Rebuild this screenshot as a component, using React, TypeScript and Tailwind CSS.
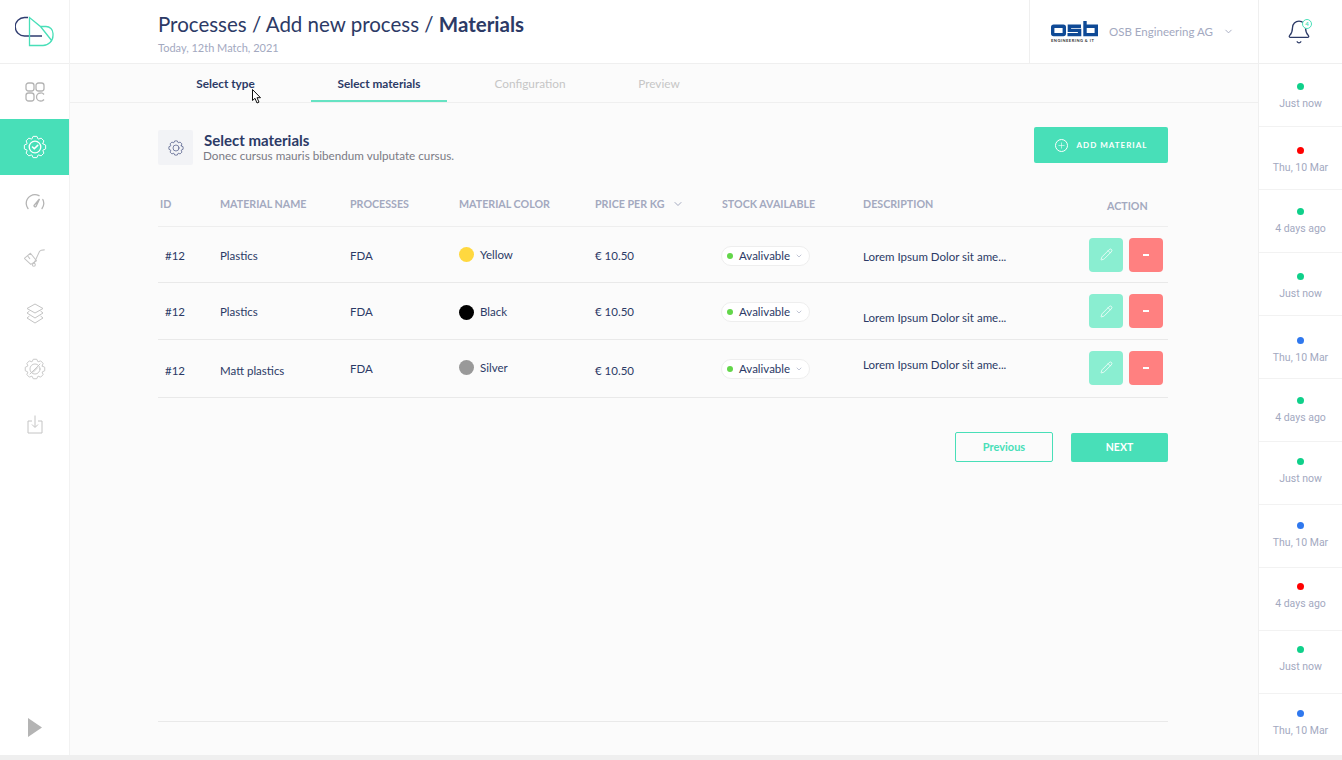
import { Bell, ChevronDown, Pencil, Plus } from 'lucide-react';

const font = { navy: 'text-[#2c3a66]' };

// 8 tooth gear outline, used by the sidebar and the section header
function gearPoints() {
  const pts: string[] = [];
  const teeth = 8;
  for (let i = 0; i < teeth; i++) {
    const a = (i / teeth) * Math.PI * 2;
    const w = Math.PI / teeth;
    const add = (r: number, t: number) =>
      pts.push(`${(12 + r * Math.cos(t)).toFixed(2)},${(12 + r * Math.sin(t)).toFixed(2)}`);
    add(8.6, a - w * 0.95);
    add(10.8, a - w * 0.45);
    add(10.8, a + w * 0.45);
    add(8.6, a + w * 0.95);
  }
  return pts.join(' ');
}

function Gear({ className, children }: { className?: string; children?: React.ReactNode }) {
  return (
    <svg viewBox="0 0 24 24" fill="none" stroke="currentColor" strokeLinejoin="round" strokeLinecap="round" className={className}>
      <polygon points={gearPoints()} />
      {children}
    </svg>
  );
}

function Logo() {
  return (
    <svg width="40" height="32" viewBox="0 0 40 32" fill="none" strokeWidth="1.3">
      <path d="M13 1.500H9.500a9.250 9.250 0 0 0 0 18.500H27" stroke="#2f3c70" />
      <path d="M14.500 1.500V29.500H28a10 10 0 0 0 10-10V17.500a7 7 0 0 0-7-7H25.500L14.500 1.500ZM25.500 10.500L37 25" stroke="#48dfb8" />
    </svg>
  );
}

function OsbLogo() {
  return (
    <div className="flex flex-col w-[47px] shrink-0">
      <svg width="47" height="16" viewBox="0 0 47 16" fill="none" stroke="#0f4a96" strokeWidth="3.400">
        <rect x="1.700" y="5.200" width="11.600" height="8.400" rx="1" />
        <path d="M30 5.200H18.400v4.200H28.600v4.200H16.500" />
        <path d="M34 0v13.600H45.300V5.200H34" />
      </svg>
      <span className="text-[4px] leading-[5px] mt-[1px] text-[#333] font-bold tracking-[0.5px] whitespace-nowrap">ENGINEERING &amp; IT</span>
    </div>
  );
}

const navIcons = [
  <svg key="a" width="20" height="20" viewBox="0 0 20 20" fill="none" stroke="currentColor" strokeWidth="1.300">
    <rect x="1" y="1" width="8" height="8" rx="2.500" />
    <rect x="11" y="1" width="8" height="8" rx="2.500" />
    <rect x="1" y="11" width="8" height="8" rx="2.500" />
    <path d="M19 12.500a3.800 3.800 0 0 0-3.500-1.500a4 4 0 0 0 0 8a3.800 3.800 0 0 0 3.500-1.500" />
  </svg>,
  <Gear key="b" className="w-[24px] h-[24px]">
    <circle cx="12" cy="12" r="5.800" strokeWidth="1.300" />
    <path d="M9.500 12l1.800 1.800 3.400-3.400" strokeWidth="1.600" />
  </Gear>,
  <svg key="c" width="20" height="16" viewBox="0 0 20 16" fill="none" stroke="currentColor" strokeWidth="1.300" strokeLinecap="round">
    <path d="M3 14.500A8.600 8.600 0 0 1 1.200 9.500a8.800 8.800 0 0 1 12.800-7.800" />
    <path d="M17 14.500a8.600 8.600 0 0 0 1.800-5a8.800 8.800 0 0 0-1-4" />
    <path d="M9 11.500L14.500 5l-3.500 7.500a1.200 1.200 0 0 1-2-1Z" />
  </svg>,
  <svg key="d" width="21" height="18" viewBox="0 0 62 52" fill="none" stroke="currentColor" strokeWidth="3" strokeLinejoin="round" strokeLinecap="round">
    <path d="M1 27L19 12L37 34L20 45Z" />
    <path d="M29 43L46 6Q49 2 60 2" />
    <path d="M11 20L17 28" />
    <circle cx="29" cy="46" r="4.500" />
  </svg>,
  <svg key="e" width="18" height="21" viewBox="0 0 18 21" fill="none" stroke="currentColor" strokeWidth="1" strokeLinejoin="round">
    <path d="M9 1L17 5.500L9 10L1 5.500Z" />
    <path d="M3.500 8L1 10L9 15L17 10L14.500 8" />
    <path d="M3.500 13L1 15L9 20L17 15L14.500 13" />
  </svg>,
  <Gear key="f" className="w-[22px] h-[22px]">
    <circle cx="12" cy="12" r="5.500" strokeWidth="1" />
    <path d="M6.500 17.500L17.500 6.500M10 15.500l5-5" strokeWidth="1" />
  </Gear>,
  <svg key="g" width="16" height="19" viewBox="0 0 16 19" fill="none" stroke="currentColor" strokeWidth="1">
    <path d="M5 6H1v12h14V6h-4" />
    <path d="M8 0.500V12M5 9.500L8 12.500l3-3" />
  </svg>,
];

const notes = [
  { label: 'Just now', dot: 'bg-[#0fd08a]', pt: 'pt-[19px]' },
  { label: 'Thu, 10 Mar', dot: 'bg-[#ff0000]', pt: 'pt-[20px]' },
  { label: '4 days ago', dot: 'bg-[#0fd08a]', pt: 'pt-[18px]' },
  { label: 'Just now', dot: 'bg-[#0fd08a]', pt: 'pt-[20px]' },
  { label: 'Thu, 10 Mar', dot: 'bg-[#2f78ee]', pt: 'pt-[21px]' },
  { label: '4 days ago', dot: 'bg-[#0fd08a]', pt: 'pt-[18px]' },
  { label: 'Just now', dot: 'bg-[#0fd08a]', pt: 'pt-[16px]' },
  { label: 'Thu, 10 Mar', dot: 'bg-[#2f78ee]', pt: 'pt-[17px]' },
  { label: '4 days ago', dot: 'bg-[#ff0000]', pt: 'pt-[15px]' },
  { label: 'Just now', dot: 'bg-[#0fd08a]', pt: 'pt-[15px]' },
  { label: 'Thu, 10 Mar', dot: 'bg-[#2f78ee]', pt: 'pt-[16px]' },
];

const rows = [
  { name: 'Plastics', color: 'Yellow', swatch: 'bg-[#ffd83f]', h: 'h-[56px]', text: 'mt-[2px]', fda: 'mt-[2px]', col: 'mt-0', stock: 'mt-[3px]', desc: 'mt-[5px]', btn: 'mt-0' },
  { name: 'Plastics', color: 'Black', swatch: 'bg-black', h: 'h-[57px]', text: 'mt-[2px]', fda: 'mt-[2px]', col: 'mt-[2px]', stock: 'mt-[2px]', desc: 'mt-[13px]', btn: 'mt-0' },
  { name: 'Matt plastics', color: 'Silver', swatch: 'bg-[#999999]', h: 'h-[58px]', text: 'mt-[4px]', fda: 'mt-0', col: 'mt-[-2px]', stock: 'mt-0', desc: 'mt-[-7px]', btn: 'mt-[-2px]' },
];

const cols = 'grid grid-cols-[62px_130px_109px_136px_127px_141px_226px_1fr] items-center';

export default function App() {
  return (
    <div className="w-[1342px] h-[760px] overflow-hidden flex flex-col bg-[#efefef] font-['Lato',sans-serif] relative">
      <div className="flex h-[755px]">
        {/* left nav */}
        <aside className="w-[70px] shrink-0 bg-white border-r border-[#f2f2f2] flex flex-col">
          <div className="h-[64px] shrink-0 border-b border-[#efefef] flex items-center justify-center">
            <Logo />
          </div>
          {navIcons.map((icon, i) => (
            <div
              key={i}
              className={`${i === 0 ? 'h-[55px]' : 'h-[55.5px]'} shrink-0 flex items-center justify-center ${i === 1 ? 'bg-[#48dfb8] text-white' : i > 2 ? 'text-[#c4c4c4]' : 'text-[#b4b4b4]'}`}
            >
              {icon}
            </div>
          ))}
          <div className="mt-auto h-[55px] flex items-center justify-center">
            <svg width="14" height="19" viewBox="0 0 14 19" className="-mt-[1px]">
              <polygon points="0,0 14,9.500 0,19" fill="#b4b4b4" />
            </svg>
          </div>
        </aside>

        {/* main */}
        <main className="flex-1 min-w-0 flex flex-col bg-[#fbfbfb]">
          <header className="h-[64px] shrink-0 bg-white border-b border-[#efefef] flex">
            <div className="flex-1 pl-[88px] pt-[11px]">
              <h1 className={`text-[20.5px] leading-[26px] ${font.navy} whitespace-nowrap`}>
                Processes / Add new process / <span className="font-bold">Materials</span>
              </h1>
              <p className="text-[11px] leading-[14px] mt-[4px] text-[#a3a9bf]">Today, 12th Match, 2021</p>
            </div>
            <div className="w-[229px] border-l border-[#efefef] flex items-center pl-[21px] text-[#a3a9bf]">
              <OsbLogo />
              <span className="ml-[11px] text-[11.5px] whitespace-nowrap">OSB Engineering AG</span>
              <ChevronDown size={11} className="ml-[10px]" />
            </div>
          </header>

          <nav className="h-[39px] shrink-0 border-b border-[#efefef] flex pl-[88px] text-[11.8px] font-bold">
            <div className={`w-[135px] pt-[1px] flex items-center justify-center ${font.navy}`}>Select type</div>
            <div className={`w-[136px] ml-[18px] pt-[4px] flex items-center justify-center border-b-2 border-[#66e3c3] ${font.navy}`}>Select materials</div>
            <div className="w-[136px] ml-[15px] pt-[1px] flex items-center justify-center text-[#c6c6c6] font-normal">Configuration</div>
            <div className="w-[100px] ml-[11px] pt-[1px] flex items-center justify-center text-[#c6c6c6] font-normal">Preview</div>
          </nav>

          <div className="flex-1 pl-[88px] pr-[90px] flex flex-col">
            <div className="flex items-start justify-between mt-[24px] h-[36px]">
              <div className="flex items-center mt-[3px]">
                <div className="w-[35px] h-[35px] rounded-[2px] bg-[#f2f3f6] flex items-center justify-center text-[#3e4a7c]">
                  <Gear className="w-[16px] h-[16px]">
                    <circle cx="12" cy="12" r="4.500" />
                  </Gear>
                </div>
                <div className="ml-[11px]">
                  <div className={`text-[15px] leading-[16px] font-bold ${font.navy}`}>Select materials</div>
                  <div className="text-[11.7px] leading-[15px] text-[#7a7a84] -ml-[1px]">Donec cursus mauris bibendum vulputate cursus.</div>
                </div>
              </div>
              <button className="w-[134px] h-[36px] rounded-[2px] bg-[#48dfb8] text-white flex items-center justify-center text-[8px] font-bold tracking-[1px]">
                <span className="w-[13px] h-[13px] mr-[9px] rounded-full border border-white flex items-center justify-center">
                  <Plus size={9} strokeWidth={1.500} />
                </span>
                ADD MATERIAL
              </button>
            </div>

            <div className={`${cols} h-[64px] pt-[27px] pb-[8px] border-b border-[#eeeeee] text-[10.7px] font-bold text-[#a3a9bf] whitespace-nowrap`}>
              <span className="pl-[2px]">ID</span>
              <span>MATERIAL NAME</span>
              <span>PROCESSES</span>
              <span>MATERIAL COLOR</span>
              <span className="flex items-center">PRICE PER KG<ChevronDown size={12} className="ml-[8px]" /></span>
              <span>STOCK AVAILABLE</span>
              <span>DESCRIPTION</span>
              <span className="mt-[4px] pl-[18px]">ACTION</span>
            </div>

            {rows.map((row, i) => (
              <div key={i} className={`${cols} ${row.h} border-b border-[#e9e9e9] text-[11.5px] ${font.navy}`}>
                <span className={`pl-[7px] ${row.text}`}>#12</span>
                <span className={row.text}>{row.name}</span>
                <span className={row.fda}>FDA</span>
                <span className={`flex items-center ${row.col}`}>
                  <span className={`w-[15px] h-[15px] rounded-full ${row.swatch}`} />
                  <span className="ml-[6px]">{row.color}</span>
                </span>
                <span className={row.text}>€ 10.50</span>
                <span className={`w-[89px] h-[20px] -ml-[1px] rounded-full border border-[#eeeeee] bg-white flex items-center pl-[5px] ${row.stock}`}>
                  <span className="w-[6px] h-[6px] rounded-full bg-[#63d64a]" />
                  <span className="ml-[6px]">Avalivable</span>
                  <ChevronDown size={8} className="ml-[5px] text-[#a3a9bf]" />
                </span>
                <span className={row.desc}>Lorem Ipsum Dolor sit ame...</span>
                <span className={`flex gap-[6px] text-white ${row.btn}`}>
                  <span className="w-[34px] h-[34px] rounded-[4px] bg-[#8aeed1] flex items-center justify-center">
                    <Pencil size={13} strokeWidth={1.400} />
                  </span>
                  <span className="w-[34px] h-[34px] rounded-[4px] bg-[#ff8080] flex items-center justify-center">
                    <span className="w-[6px] h-[2px] bg-white" />
                  </span>
                </span>
              </div>
            ))}

            <div className="flex justify-end gap-[18px] mt-[34px]">
              <button className="w-[98px] h-[30px] rounded-[2px] border border-[#48dfb8] text-[#48dfb8] text-[11px] font-bold">Previous</button>
              <button className="w-[97px] h-[29px] mt-[1px] rounded-[2px] bg-[#48dfb8] text-white text-[10.5px] font-bold">NEXT</button>
            </div>

            <div className="mt-auto mb-[33px] border-t border-[#e9e9e9]" />
          </div>
        </main>

        {/* right rail */}
        <aside className="w-[84px] shrink-0 bg-white border-l border-[#efefef] flex flex-col overflow-hidden">
          <div className="h-[64px] shrink-0 border-b border-[#efefef] flex items-center justify-center relative text-[#2c3a66]">
            <Bell size={26} strokeWidth={1.200} className="-ml-[4px] mt-[1px]" />
            <span className="absolute left-[43px] top-[19px] w-[10px] h-[10px] rounded-full bg-white border-[1.5px] border-[#48dfb8] text-[6px] leading-[7px] text-center text-[#48dfb8] font-bold">4</span>
          </div>
          {notes.map((n, i) => (
            <div key={i} className={`h-[63px] shrink-0 border-b border-[#f2f2f2] last:border-b-0 flex flex-col items-center ${n.pt} font-['Roboto',sans-serif]`}>
              <span className={`w-[7px] h-[7px] rounded-full ${n.dot}`} />
              <span className="mt-[7px] text-[10.5px] leading-[13px] text-[#a3a9bf] whitespace-nowrap">{n.label}</span>
            </div>
          ))}
        </aside>
      </div>

      {/* mouse pointer from the capture */}
      <svg className="absolute left-[252px] top-[89px]" width="11" height="15" viewBox="0 0 11 15">
        <path d="M0.500 0.500V11.500L3 9.300L5 14L7 13.100L5 8.700H8.500Z" fill="#fff" stroke="#111" strokeWidth="1" />
      </svg>
    </div>
  );
}
